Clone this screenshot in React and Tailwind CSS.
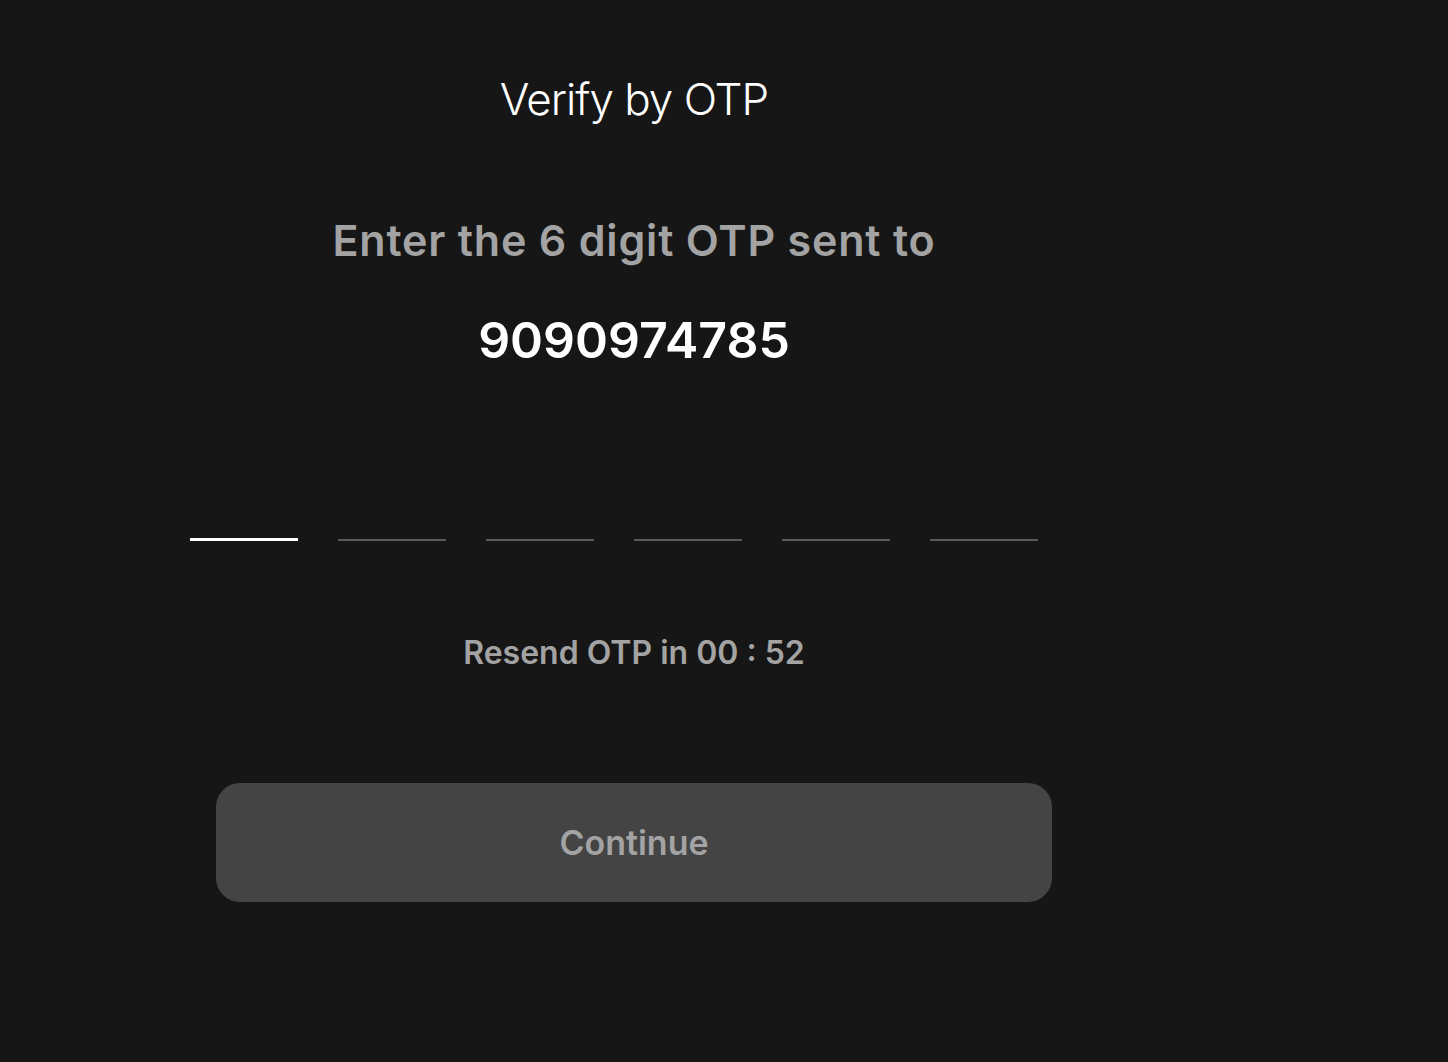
import React from "react";

export default function App() {
  const boxes = [0, 1, 2, 3, 4, 5];

  return (
    <div className="min-h-screen w-full bg-[#161616] font-['Inter','Liberation_Sans',sans-serif]">
      <div className="w-[1268px] flex flex-col items-center pt-[73px]">
        <h1 className="text-[44px] leading-[53px] font-light text-white tracking-[-1px]">
          Verify by OTP
        </h1>

        <p className="mt-[90px] text-[43px] leading-[48px] font-semibold text-[#a3a3a3] tracking-[0.8px]">
          Enter the 6 digit OTP sent to
        </p>

        <p className="mt-[46px] text-[50px] leading-[60px] font-semibold text-white">
          9090974785
        </p>

        {/* OTP inputs */}
        <div className="mt-[111px] flex">
          {boxes.map((i) => (
            <div
              key={i}
              className={
                i === 0
                  ? "w-[108px] h-[60px] mr-[40px] border-b-[3px] border-white"
                  : "w-[108px] h-[60px] mr-[40px] border-b-2 border-[#5a5a5a] mb-[1px]"
              }
            />
          ))}
        </div>

        <p className="mt-[92px] text-[32px] leading-[38px] font-semibold text-[#a3a3a3]">
          Resend OTP in 00 : 52
        </p>

        <button className="mt-[111px] w-[836px] h-[119px] rounded-[24px] bg-[#444444] text-[34px] font-semibold text-[#a3a3a3]">
          Continue
        </button>
      </div>
    </div>
  );
}
